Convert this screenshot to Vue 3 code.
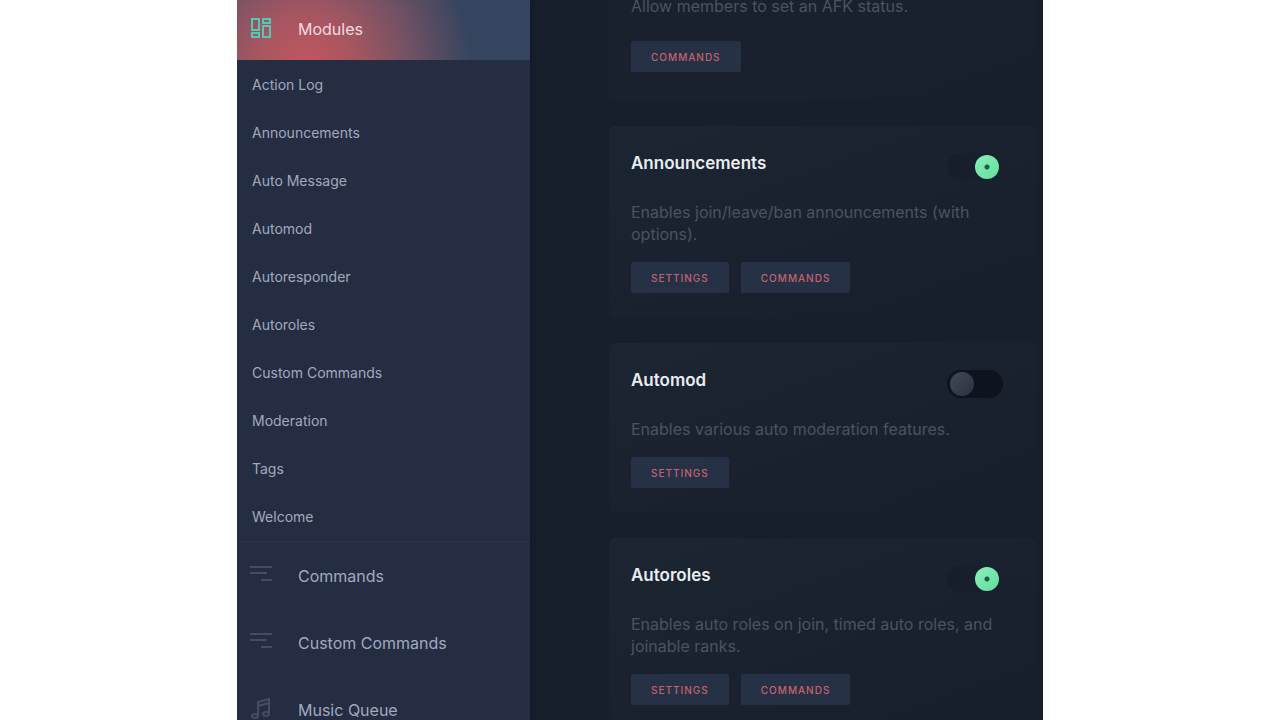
<script setup>
import { ref } from 'vue'

const modules = [
  'Action Log', 'Announcements', 'Auto Message', 'Automod', 'Autoresponder',
  'Autoroles', 'Custom Commands', 'Moderation', 'Tags', 'Welcome',
]

const sections = [
  { label: 'Commands', icon: 'lines' },
  { label: 'Custom Commands', icon: 'lines' },
  { label: 'Music Queue', icon: 'music' },
]

const cards = ref([
  { title: 'Announcements', text: 'Enables join/leave/ban announcements (with options).', on: true, actions: ['Settings', 'Commands'] },
  { title: 'Automod', text: 'Enables various auto moderation features.', on: false, actions: ['Settings'] },
  { title: 'Autoroles', text: 'Enables auto roles on join, timed auto roles, and joinable ranks.', on: true, actions: ['Settings', 'Commands'] },
])
</script>

<template>
  <div class="page">
    <div class="dashboard">
      <nav class="sidebar">
        <a href="#" class="current">
          <svg class="icon" viewBox="0 0 22 22" fill="none" stroke="#50c9b5" stroke-width="2">
            <rect x="2" y="2" width="7" height="11" />
            <rect x="2" y="16" width="7" height="4" />
            <rect x="13" y="2" width="7" height="4" />
            <rect x="13" y="9" width="7" height="11" />
          </svg>
          <span>Modules</span>
        </a>
        <ul class="modules">
          <li v-for="name in modules" :key="name"><a href="#">{{ name }}</a></li>
        </ul>
        <a v-for="s in sections" :key="s.label" href="#" class="section">
          <svg v-if="s.icon === 'lines'" class="icon" viewBox="0 0 22 22" fill="none" stroke="#454d64" stroke-width="2">
            <path d="M0 3H22M0 9H17M11 16H22" />
          </svg>
          <svg v-else class="icon" viewBox="0 0 22 22" fill="none" stroke="#454d64" stroke-width="2">
            <path d="M8 18V4L19 1V16M8 8L19 5" />
            <ellipse cx="5" cy="18" rx="3" ry="2" />
            <ellipse cx="16" cy="16" rx="3" ry="2" />
          </svg>
          <span>{{ s.label }}</span>
        </a>
      </nav>

      <main class="content">
        <section class="card scrolled">
          <p>Allow members to set an AFK status.</p>
          <div class="actions"><button type="button">Commands</button></div>
        </section>
        <section v-for="card in cards" :key="card.title" class="card">
          <header>
            <h2>{{ card.title }}</h2>
            <input v-model="card.on" type="checkbox" role="switch" class="toggle" :aria-label="card.title">
          </header>
          <p>{{ card.text }}</p>
          <div class="actions">
            <button v-for="a in card.actions" :key="a" type="button">{{ a }}</button>
          </div>
        </section>
      </main>
    </div>
  </div>
</template>

<style>
body {
  background: #fff;
}
</style>

<style scoped>
.page {
  height: 100vh;
  padding: 0 237px;
  overflow: hidden;
  font-family: Inter, "Liberation Sans", sans-serif;
}
.dashboard {
  display: flex;
  height: 100%;
  overflow: hidden;
  background: #171f2d;
}
.sidebar {
  position: relative;
  flex: 0 0 293px;
  background: #252d43;
  box-shadow: 1px 0 4px #111827;
}
a {
  color: #a2a9bf;
  text-decoration: none;
}
.icon {
  width: 22px;
  height: 22px;
  flex: none;
}
.current,
.section {
  display: flex;
  align-items: center;
  gap: 26px;
  padding-left: 13px;
  font-size: 16px;
}
.current {
  height: 60px;
  color: #f0dce1;
  background: radial-gradient(circle 165px at 68px 64px, #c0565f 0%, #a65660 30%, #745264 62%, #36455f 100%);
}
.current .icon {
  margin-bottom: 4px;
}
.current span {
  margin-bottom: 2px;
}
.modules {
  margin: 0;
  padding: 1px 0 0;
  list-style: none;
  border-bottom: 1px solid #2b334a;
}
.modules a {
  display: block;
  padding-left: 15px;
  font-size: 14px;
  line-height: 48px;
}
.section {
  height: 67px;
}
.section .icon {
  margin-bottom: 1px;
}
.content {
  flex: 1;
  min-width: 0;
  padding: 0 7px 0 79px;
}
.card {
  margin-bottom: 25px;
  padding: 25px 33px 25px 22px;
  border-radius: 6px;
  background: linear-gradient(160deg, #1c2532, #19212f 60%, #171f2d);
}
.card.scrolled {
  margin-top: -5px;
  padding-top: 0;
  padding-bottom: 29px;
  background: linear-gradient(160deg, #19212f 60%, #171f2d);
}
header {
  display: flex;
  justify-content: space-between;
  align-items: flex-start;
  min-height: 50px;
}
h2 {
  margin: 0;
  color: #e9edf2;
  font-size: 17px;
  font-weight: 600;
  line-height: 24px;
}
p {
  margin: 0 0 17px;
  color: #4a5361;
  font-size: 16px;
  line-height: 22px;
}
.scrolled p {
  margin-bottom: 24px;
}
.actions {
  display: flex;
  gap: 12px;
}
button {
  height: 31px;
  padding: 0 20px;
  border: 0;
  border-radius: 2px;
  background: #263145;
  color: #c5636d;
  font: 500 10px Inter, "Liberation Sans", sans-serif;
  letter-spacing: 1px;
  text-transform: uppercase;
}
.toggle {
  appearance: none;
  width: 56px;
  height: 28px;
  margin: 2px 0 0;
  padding: 2px 3px;
  border-radius: 14px;
  background: #0e141e;
}
.toggle::before {
  content: "";
  display: block;
  width: 24px;
  height: 24px;
  border-radius: 50%;
  background: linear-gradient(135deg, #414a5a, #2a3240);
}
.toggle:checked {
  background: linear-gradient(90deg, #161e2b, #19212f);
}
.toggle:checked::before {
  margin-left: 25px;
  background: radial-gradient(circle, #1c5b48 2px, transparent 3px), linear-gradient(135deg, #8df0bd, #5fdd98);
}
</style>
